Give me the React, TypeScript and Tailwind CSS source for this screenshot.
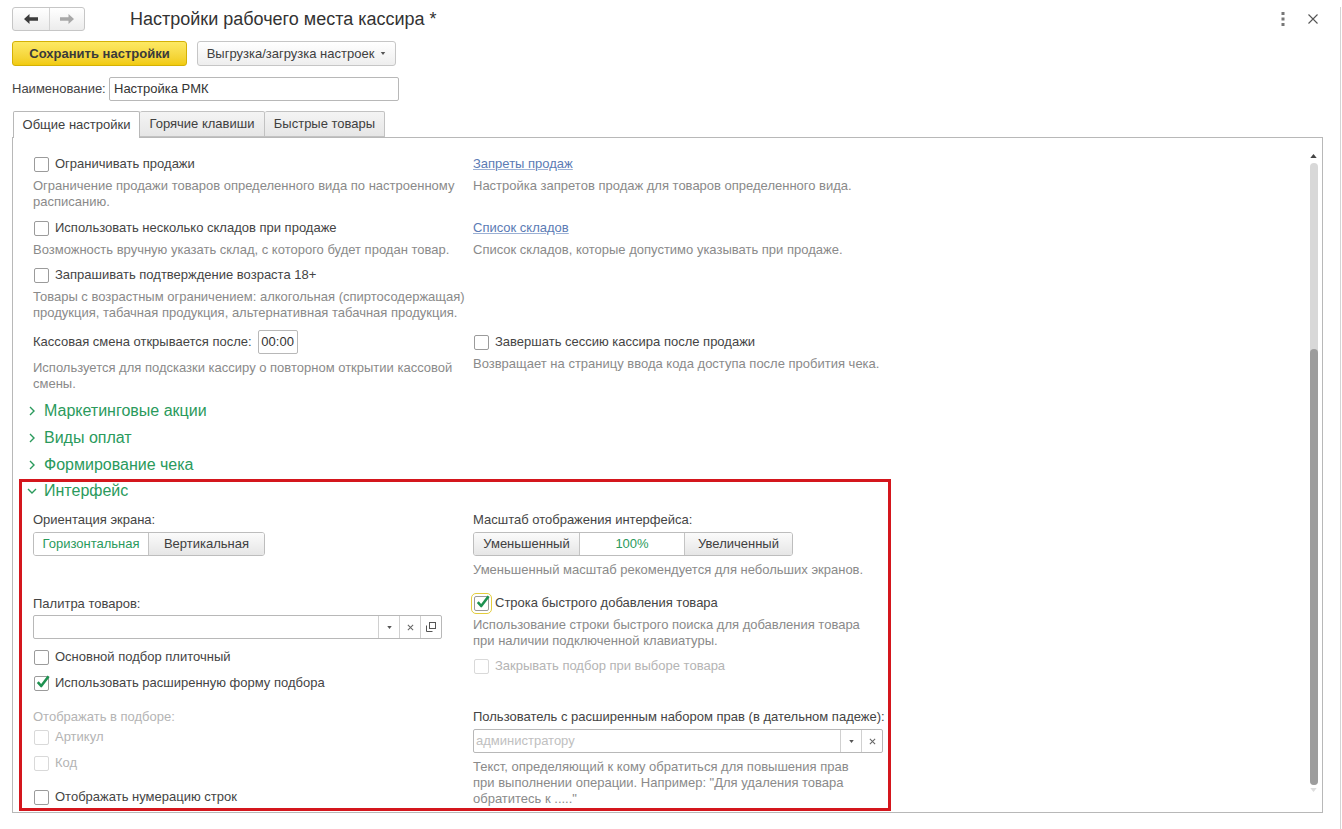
import type { ReactNode } from "react";

/** Checkbox in the 1C "Taxi" look: thin grey box, green tick that spills over the top edge. */
function Box({
  checked,
  disabled,
  focus,
}: {
  checked?: boolean;
  disabled?: boolean;
  focus?: boolean;
}) {
  return (
    <span
      className={`relative ml-[1px] flex h-[15px] w-[15px] shrink-0 rounded-[2px] border bg-white ${
        disabled ? "border-[#d9d9d9]" : "border-[#9b9b9b]"
      } ${focus ? "outline outline-1 outline-offset-[2px] outline-[#e3cd3c]" : ""}`}
    >
      {checked && (
        <svg
          viewBox="0 0 16 16"
          className="absolute -top-[3px] left-[0px] h-[16px] w-[16px]"
        >
          <path
            d="M2.8 8.2 L6.2 12 L13.6 2.2"
            fill="none"
            stroke="#1e9150"
            strokeWidth="2.6"
            strokeLinejoin="round"
          />
        </svg>
      )}
    </span>
  );
}

function CheckRow({
  label,
  checked,
  disabled,
  focus,
  className = "",
}: {
  label: string;
  checked?: boolean;
  disabled?: boolean;
  focus?: boolean;
  className?: string;
}) {
  return (
    <div className={`flex h-[20px] items-center gap-[6px] ${className}`}>
      <Box checked={checked} disabled={disabled} focus={focus} />
      <span className={disabled ? "text-[#b4b4b4]" : "text-[#444]"}>{label}</span>
    </div>
  );
}

function Desc({ children, className = "" }: { children: ReactNode; className?: string }) {
  return (
    <div className={`whitespace-nowrap leading-[16px] text-[#8a8a8a] ${className}`}>
      {children}
    </div>
  );
}

function Label({ children, className = "" }: { children: ReactNode; className?: string }) {
  return <div className={`flex h-[20px] items-center text-[#444] ${className}`}>{children}</div>;
}

function Chevron({ open }: { open?: boolean }) {
  return open ? (
    <svg viewBox="0 0 10 6" className="h-[6px] w-[10px]">
      <path d="M1 1 L5 5 L9 1" fill="none" stroke="#2a9a5c" strokeWidth="1.4" />
    </svg>
  ) : (
    <svg viewBox="0 0 6 10" className="h-[10px] w-[6px]">
      <path d="M1 1 L5 5 L1 9" fill="none" stroke="#2a9a5c" strokeWidth="1.4" />
    </svg>
  );
}

function Group({ title }: { title: string }) {
  return (
    <div className="-ml-[4px] flex h-[27px] items-center">
      <span className="flex w-[15px] justify-start">
        <Chevron />
      </span>
      <span className="text-[16px] text-[#2a9a5c]">{title}</span>
    </div>
  );
}

/** Segmented choice, the 1C way: selected part is white with green text. */
function Segmented({ items, widths, active }: { items: string[]; widths: string[]; active: number }) {
  return (
    <div className="flex h-[24px] overflow-hidden rounded-[3px] border border-[#bdbdbd]">
      {items.map((t, i) => (
        <div
          key={t}
          className={`flex items-center justify-center ${widths[i]} ${
            i > 0 ? "border-l border-[#c4c4c4]" : ""
          } ${
            i === active
              ? "bg-white text-[#2a9a5c]"
              : "bg-gradient-to-b from-[#fbfbfb] to-[#e6e6e6] text-[#404040]"
          }`}
        >
          {t}
        </div>
      ))}
    </div>
  );
}

function DropBtn() {
  return (
    <span className="flex w-[21px] items-center justify-center border-l border-[#d0d0d0]">
      <svg viewBox="0 0 6 4" className="h-[3px] w-[5px]">
        <path d="M0 0 H6 L3 4 Z" fill="#555" />
      </svg>
    </span>
  );
}

function ClearBtn() {
  return (
    <span className="flex w-[21px] items-center justify-center border-l border-[#d0d0d0]">
      <svg viewBox="0 0 8 8" className="h-[7px] w-[7px]">
        <path d="M1 1 L7 7 M7 1 L1 7" stroke="#666" strokeWidth="1.2" />
      </svg>
    </span>
  );
}

function OpenBtn() {
  return (
    <span className="flex w-[21px] items-center justify-center border-l border-[#d0d0d0]">
      <svg viewBox="0 0 10 10" className="h-[10px] w-[10px]">
        <rect x="3.5" y="0.5" width="6" height="6" fill="none" stroke="#555" />
        <path d="M0.5 3.5 V9.5 H6.5" fill="none" stroke="#555" />
      </svg>
    </span>
  );
}

export default function App() {
  return (
    <div className="relative h-[829px] w-[1342px] overflow-hidden bg-white font-['Liberation_Sans',Arial,sans-serif] text-[13px] text-[#404040]">
      <div className="h-[828px] w-[1341px] border-r border-b border-[#d4d4d4]">
        {/* Title bar */}
        <div className="mt-[7px] flex h-[24px] items-center pl-[12px] pr-[22px]">
          <div className="flex h-[24px] w-[73px] overflow-hidden rounded-[3px] border border-[#c6c6c6] bg-gradient-to-b from-white to-[#ececec]">
            <span className="flex w-[37px] items-center justify-center border-r border-[#d2d2d2]">
              <svg viewBox="0 0 14 10" className="h-[10px] w-[14px]">
                <path d="M0 5 L5.5 0 V3.2 H14 V6.8 H5.5 V10 Z" fill="#3c3c3c" />
              </svg>
            </span>
            <span className="flex flex-1 items-center justify-center">
              <svg viewBox="0 0 14 10" className="h-[10px] w-[14px]">
                <path d="M14 5 L8.5 0 V3.2 H0 V6.8 H8.5 V10 Z" fill="#a8a8a8" />
              </svg>
            </span>
          </div>
          <div className="mt-[1px] ml-[45px] text-[18px] text-[#333]">Настройки рабочего места кассира *</div>
          <div className="ml-auto flex items-center gap-[23px]">
            <svg viewBox="0 0 4 14" className="h-[14px] w-[4px]">
              <rect x="0.5" y="0" width="3" height="3" fill="#777" />
              <rect x="0.5" y="5.5" width="3" height="3" fill="#777" />
              <rect x="0.5" y="11" width="3" height="3" fill="#777" />
            </svg>
            <svg viewBox="0 0 10 10" className="h-[10px] w-[10px]">
              <path d="M0.5 0.5 L9.5 9.5 M9.5 0.5 L0.5 9.5" stroke="#555" strokeWidth="1.1" />
            </svg>
          </div>
        </div>

        {/* Command bar */}
        <div className="mt-[10px] flex h-[25px] gap-[10px] pl-[12px]">
          <div className="flex w-[175px] items-center justify-center rounded-[3px] border border-[#d4b106] bg-gradient-to-b from-[#fde963] to-[#f1cb0b] font-bold text-[#3a3a3a]">
            Сохранить настройки
          </div>
          <div className="flex w-[199px] items-center justify-center gap-[6px] rounded-[3px] border border-[#c6c6c6] bg-gradient-to-b from-white to-[#eeeeee] text-[#404040]">
            Выгрузка/загрузка настроек
            <svg viewBox="0 0 6 4" className="h-[3px] w-[6px]">
              <path d="M0 0 H6 L3 4 Z" fill="#555" />
            </svg>
          </div>
        </div>

        {/* Name */}
        <div className="mt-[11px] flex h-[24px] items-center pl-[12px]">
          <span className="w-[97px] text-[#444]">Наименование:</span>
          <div className="flex h-[24px] w-[290px] items-center rounded-[2px] border border-[#b8b8b8] bg-white pl-[4px] text-[#333]">
            Настройка РМК
          </div>
        </div>

        {/* Tabs */}
        <div className="mt-[10px] flex h-[26px] pl-[13px]">
          <div className="relative z-10 flex h-[27px] w-[127px] items-center justify-center rounded-t-[2px] border border-b-0 border-[#b8b8b8] bg-white text-[#404040]">
            Общие настройки
          </div>
          <div className="flex w-[125px] items-center justify-center rounded-t-[2px] border border-l-0 border-[#c2c2c2] bg-gradient-to-b from-[#f4f4f4] to-[#e6e6e6] text-[#404040]">
            Горячие клавиши
          </div>
          <div className="flex w-[120px] items-center justify-center rounded-t-[2px] border border-l-0 border-[#c2c2c2] bg-gradient-to-b from-[#f4f4f4] to-[#e6e6e6] text-[#404040]">
            Быстрые товары
          </div>
        </div>

        {/* Tab panel */}
        <div className="ml-[12px] flex h-[676px] w-[1311px] border border-[#b8b8b8] bg-white">
          <div className="flex-1 pt-[16px] pl-[20px]">
            <div className="grid grid-cols-[440px_1fr]">
              <div>
                <CheckRow label="Ограничивать продажи" />
                <Desc className="mt-[4px]">
                  Ограничение продажи товаров определенного вида по настроенному
                  <br />
                  расписанию.
                </Desc>
              </div>
              <div>
                <div className="flex h-[20px] items-center text-[#5b7bb4] underline decoration-[#9bb0d4]">
                  Запреты продаж
                </div>
                <Desc className="mt-[4px]">Настройка запретов продаж для товаров определенного вида.</Desc>
              </div>
            </div>

            <div className="mt-[8px] grid grid-cols-[440px_1fr]">
              <div>
                <CheckRow label="Использовать несколько складов при продаже" />
                <Desc className="mt-[4px]">Возможность вручную указать склад, с которого будет продан товар.</Desc>
              </div>
              <div>
                <div className="flex h-[20px] items-center text-[#5b7bb4] underline decoration-[#9bb0d4]">
                  Список складов
                </div>
                <Desc className="mt-[4px]">Список складов, которые допустимо указывать при продаже.</Desc>
              </div>
            </div>

            <div className="mt-[7px]">
              <CheckRow label="Запрашивать подтверждение возраста 18+" />
              <Desc className="mt-[4px]">
                Товары с возрастным ограничением: алкогольная (спиртосодержащая)
                <br />
                продукция, табачная продукция, альтернативная табачная продукция.
              </Desc>
            </div>

            <div className="mt-[7px] grid grid-cols-[440px_1fr]">
              <div>
                <div className="flex h-[28px] items-center gap-[6px]">
                  <span className="text-[#444]">Кассовая смена открывается после:</span>
                  <span className="flex h-[24px] w-[40px] items-center justify-center rounded-[2px] border border-[#b8b8b8] text-[#333]">
                    00:00
                  </span>
                </div>
                <Desc className="mt-[4px]">
                  Используется для подсказки кассиру о повторном открытии кассовой
                  <br />
                  смены.
                </Desc>
              </div>
              <div>
                <div className="flex h-[28px] items-center">
                  <CheckRow label="Завершать сессию кассира после продажи" />
                </div>
                <Desc>Возвращает на страницу ввода кода доступа после пробития чека.</Desc>
              </div>
            </div>

            <div className="mt-[5px]">
              <Group title="Маркетинговые акции" />
              <Group title="Виды оплат" />
              <Group title="Формирование чека" />
            </div>

            {/* Interface group, framed in red in the screenshot */}
            <div className="mt-[1px] -ml-[14px] w-[872px] border-[3px] border-[#d4161d] pl-[11px] pb-[1px]">
              <div className="-ml-[6px] flex h-[18px] items-center">
                <span className="flex w-[17px] justify-start">
                  <Chevron open />
                </span>
                <span className="text-[16px] text-[#2a9a5c]">Интерфейс</span>
              </div>

              <div className="mt-[10px] grid grid-cols-[440px_1fr]">
                <div>
                  <Label>Ориентация экрана:</Label>
                  <div className="mt-[2px] flex">
                    <Segmented
                      items={["Горизонтальная", "Вертикальная"]}
                      widths={["w-[114px]", "w-[116px]"]}
                      active={0}
                    />
                  </div>
                  <Label className="mt-[38px]">Палитра товаров:</Label>
                  <div className="mt-[1px] flex h-[24px] w-[409px] rounded-[2px] border border-[#b8b8b8] bg-white">
                    <span className="flex-1" />
                    <DropBtn />
                    <ClearBtn />
                    <OpenBtn />
                  </div>
                  <CheckRow className="mt-[8px]" label="Основной подбор плиточный" />
                  <CheckRow className="mt-[6px]" label="Использовать расширенную форму подбора" checked />
                  <div className="mt-[14px] flex h-[20px] items-center text-[#b4b4b4]">Отображать в подборе:</div>
                  <CheckRow label="Артикул" disabled />
                  <CheckRow className="mt-[6px]" label="Код" disabled />
                  <CheckRow className="mt-[14px]" label="Отображать нумерацию строк" />
                </div>

                <div>
                  <Label>Масштаб отображения интерфейса:</Label>
                  <div className="mt-[2px] flex">
                    <Segmented
                      items={["Уменьшенный", "100%", "Увеличенный"]}
                      widths={["w-[105px]", "w-[105px]", "w-[108px]"]}
                      active={1}
                    />
                  </div>
                  <Desc className="mt-[6px]">Уменьшенный масштаб рекомендуется для небольших экранов.</Desc>
                  <CheckRow className="mt-[15px]" label="Строка быстрого добавления товара" checked focus />
                  <Desc className="mt-[4px]">
                    Использование строки быстрого поиска для добавления товара
                    <br />
                    при наличии подключенной клавиатуры.
                  </Desc>
                  <CheckRow className="mt-[7px]" label="Закрывать подбор при выборе товара" disabled />
                  <Label className="mt-[31px]">Пользователь с расширенным набором прав (в дательном падеже):</Label>
                  <div className="mt-[2px] flex h-[24px] w-[410px] rounded-[2px] border border-[#b8b8b8] bg-white">
                    <span className="flex flex-1 items-center pl-[2px] text-[#c0c0c0]">администратору</span>
                    <DropBtn />
                    <ClearBtn />
                  </div>
                  <Desc className="mt-[6px]">
                    Текст, определяющий к кому обратиться для повышения прав
                    <br />
                    при выполнении операции. Например: "Для удаления товара
                    <br />
                    обратитесь к ....."
                  </Desc>
                </div>
              </div>
            </div>
          </div>

          {/* Scrollbar */}
          <div className="flex w-[16px] flex-col items-center pt-[16px] pr-[1px]">
            <svg viewBox="0 0 8 5" className="h-[4px] w-[7px]">
              <path d="M0 5 L4 0 L8 5 Z" fill="#444" />
            </svg>
            <div className="mt-[5px] flex h-[622px] w-[8px] flex-col rounded-full bg-[#d8d8d8]">
              <div className="h-[186px]" />
              <div className="flex-1 rounded-full bg-[#9d9d9d]" />
            </div>
            <svg viewBox="0 0 8 5" className="mt-[3px] h-[4px] w-[7px]">
              <path d="M0 0 L8 0 L4 5 Z" fill="#dddddd" />
            </svg>
          </div>
        </div>
      </div>
    </div>
  );
}
